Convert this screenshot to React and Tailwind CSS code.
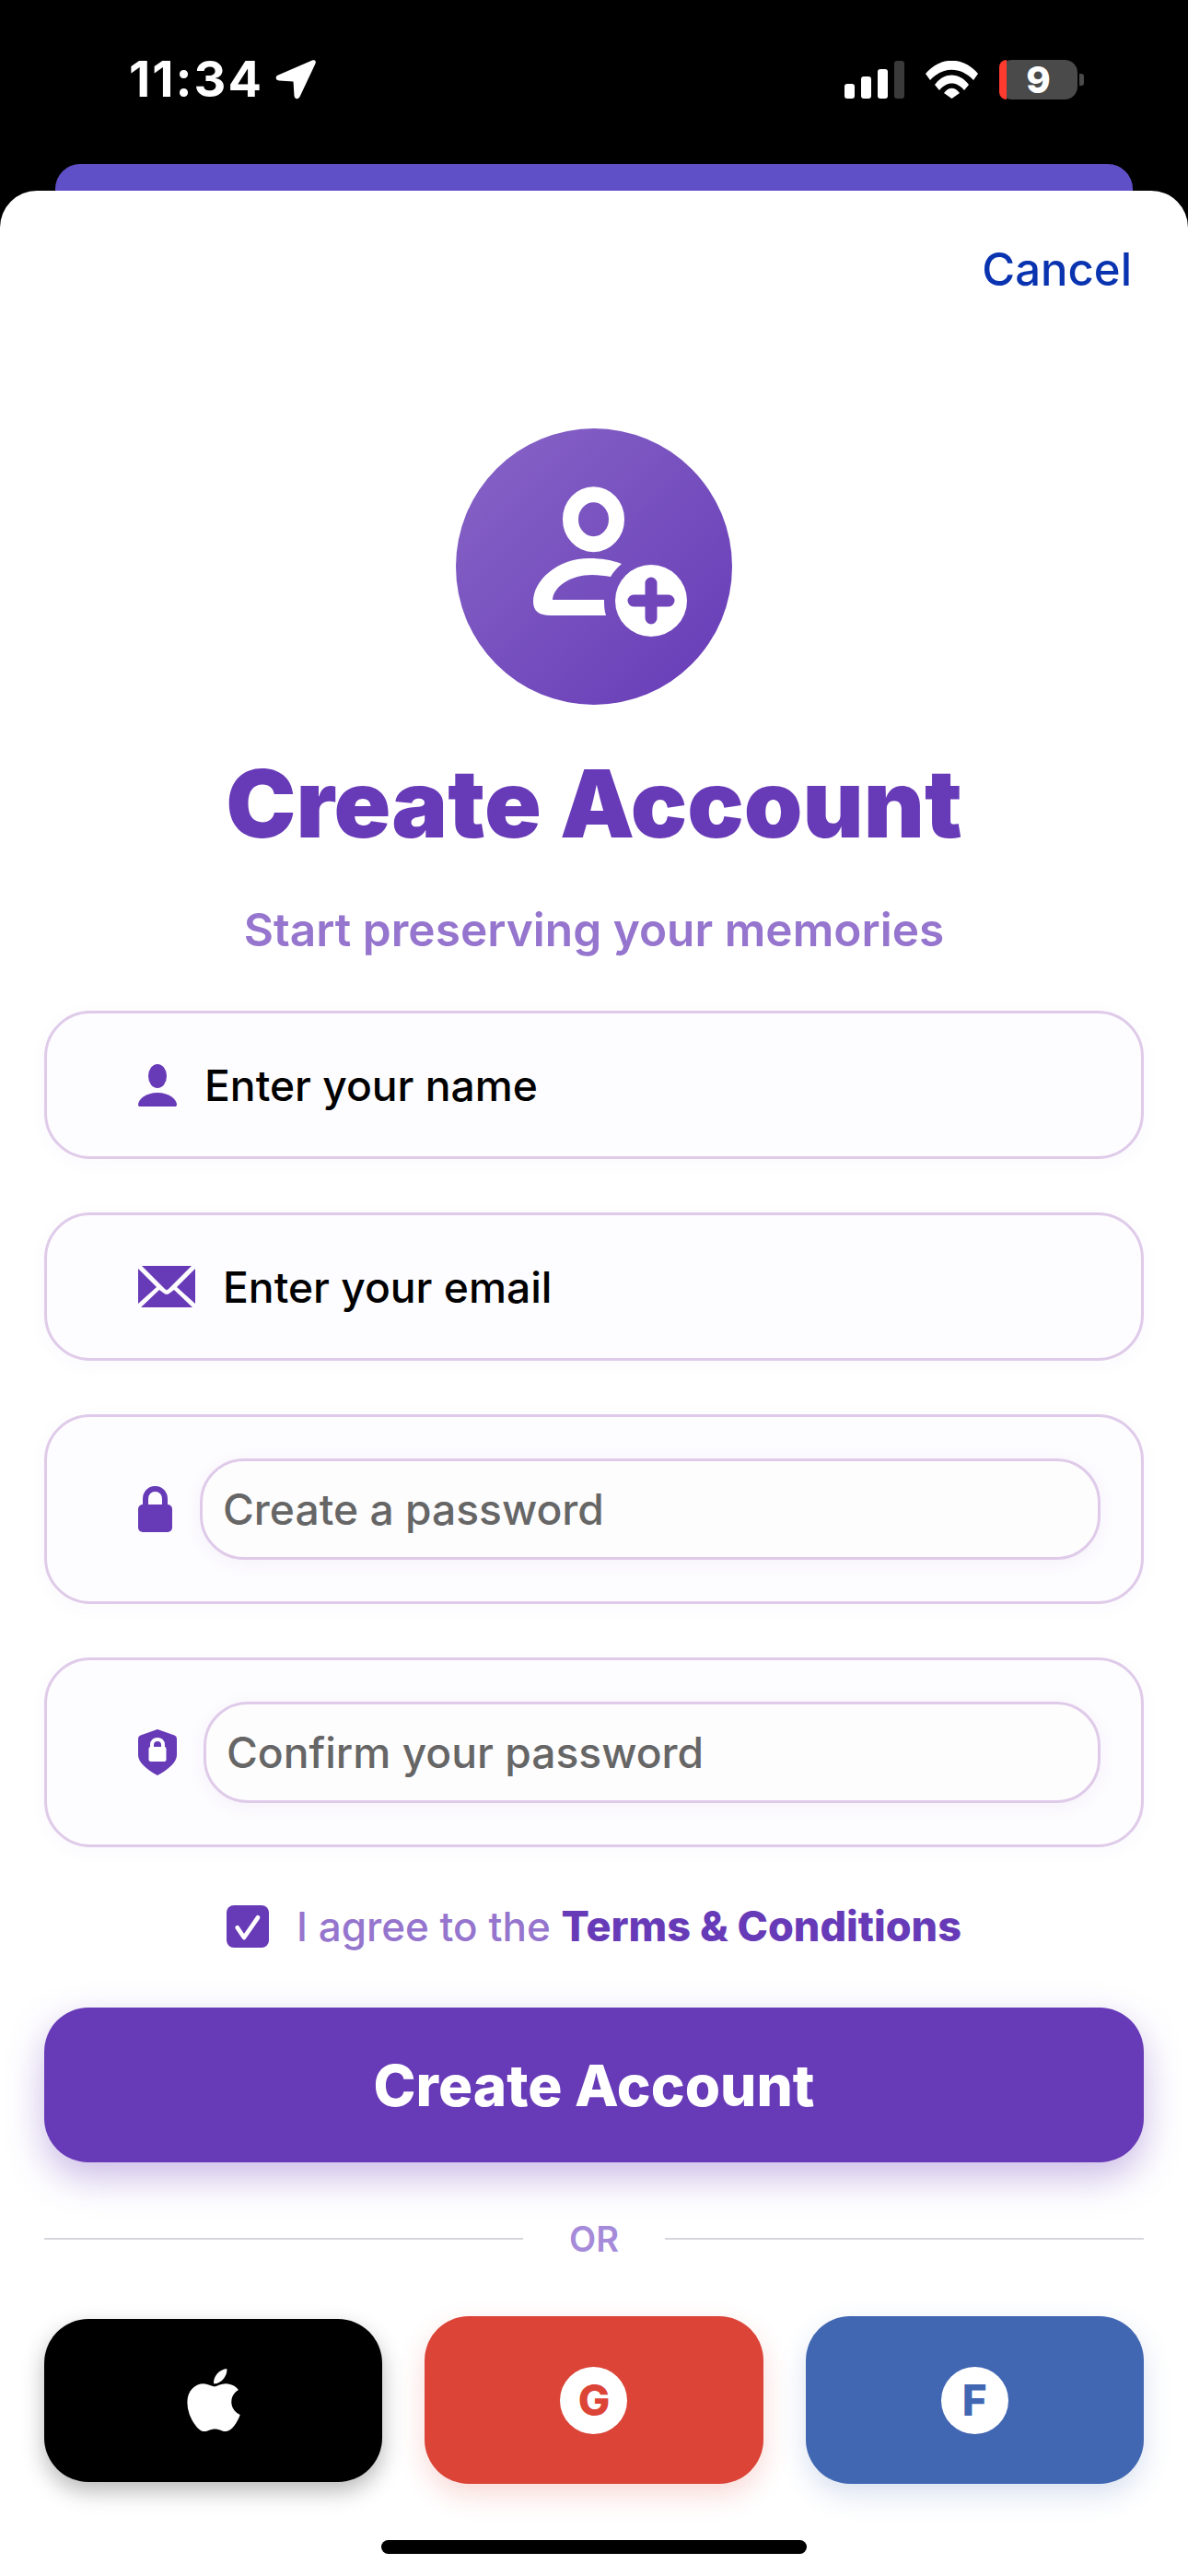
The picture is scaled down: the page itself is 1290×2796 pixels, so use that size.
import React from 'react';
import { FaApple } from 'react-icons/fa';

const PersonPlusIcon = () => (
  <svg width="300" height="300" viewBox="0 0 300 300">
    <ellipse cx="149.500" cy="98.700" rx="25" ry="27" fill="none" stroke="#fff" strokeWidth="17" />
    <path
      d="M180 147C170 143 158 141 145 141C110 141 84 165 84 188C84 198 90 203 103 203H163C161 197 161 192 161 186H105C106 172 124 159 148 159C155 159 162 160 168 161C171 156 175 151 180 147Z"
      fill="#fff"
    />
    <circle cx="212" cy="187" r="39" fill="#fff" />
    <path d="M193 187H231M212 168V206" stroke="#7146bb" strokeWidth="13" strokeLinecap="round" />
  </svg>
);

const UserIcon = () => (
  <svg width="42" height="46" viewBox="0 0 42 46" className="shrink-0">
    <ellipse cx="21" cy="13" rx="10" ry="13" fill="#673ab7" />
    <path d="M21 31C9 31 0 38 0 44C0 45.500 1 46 2 46H40C41 46 42 45.500 42 44C42 38 33 31 21 31Z" fill="#673ab7" />
  </svg>
);

const MailIcon = () => (
  <svg width="62" height="45" viewBox="0 0 62 45" className="shrink-0">
    <path d="M4 0H58L33 25C31.500 26.500 30.500 26.500 29 25Z" fill="#673ab7" />
    <path d="M0 3L20 23L0 41Z M62 3L42 23L62 41Z" fill="#673ab7" />
    <path d="M23 26L27 29C30 31.500 32 31.500 35 29L39 26L59 45H3Z" fill="#673ab7" />
  </svg>
);

const LockIcon = () => (
  <svg width="37" height="50" viewBox="0 0 37 50" className="shrink-0">
    <path d="M8 22V14C8 8 12 3 18.500 3C25 3 29 8 29 14V22" fill="none" stroke="#673ab7" strokeWidth="6" />
    <rect x="0" y="20" width="37" height="30" rx="5" fill="#673ab7" />
  </svg>
);

const ShieldIcon = () => (
  <svg width="42" height="50" viewBox="0 0 42 50" className="shrink-0">
    <path d="M21 0L38 6C41 7 42 8 42 11V28C42 36 32 44 21 50C10 44 0 36 0 28V11C0 8 1 7 4 6Z" fill="#673ab7" />
    <path d="M15 21V17C15 13 17.500 11 21 11C24.500 11 27 13 27 17V21" fill="none" stroke="#fff" strokeWidth="4" />
    <rect x="11.500" y="19" width="19" height="16" rx="2" fill="#fff" />
  </svg>
);

const StatusBar = () => (
  <div className="h-[178px] flex items-start justify-between pl-[140px] pr-[113px] pt-[63px] text-white">
    <div className="flex items-center gap-[13px] h-[46px]">
      <span className="text-[54px] leading-[46px] font-bold tracking-[2px]">11:34</span>
      <svg width="44" height="44" viewBox="0 0 44 44">
        <path d="M40 1.500C43 0.500 44.500 2 43.500 5L27 40C25 44.500 21 44 20.500 40L19.500 24.500L4 23.500C0 23 -0.500 19 3 17.500Z" fill="#fff" />
      </svg>
    </div>
    <div className="flex items-center h-[46px]">
      <div className="flex items-end gap-[7px] h-[41px]">
        <div className="w-[11px] h-[16px] rounded-[3px] bg-white" />
        <div className="w-[11px] h-[24px] rounded-[3px] bg-white" />
        <div className="w-[11px] h-[32px] rounded-[3px] bg-white" />
        <div className="w-[11px] h-[41px] rounded-[3px] bg-[#3a3a3a]" />
      </div>
      <svg width="57" height="41" viewBox="0 0 57 41" className="ml-[23px]">
        <path d="M0 14C16 -5 41 -5 57 14L52 21C38 6 19 6 5 21Z" fill="#fff" />
        <path d="M10 26C20 12 37 12 47 26L42 32C34 22 23 22 15 32Z" fill="#fff" />
        <path d="M20 35C25 28 32 28 37 35L28.500 41Z" fill="#fff" />
      </svg>
      <div className="ml-[23px] w-[85px] h-[43px] rounded-[14px] bg-[#4a4a4a] relative flex items-center justify-center">
        <div className="absolute left-0 top-0 bottom-0 w-[8px] rounded-l-[14px] bg-[#ff3b30]" />
        <span className="text-[40px] leading-[43px] font-extrabold">9</span>
      </div>
      <div className="ml-[2px] w-[5px] h-[13px] rounded-r-[3px] bg-[#4a4a4a]" />
    </div>
  </div>
);

const Field = ({ icon, gap, label, className }) => (
  <div className={`h-[161px] shrink-0 rounded-[50px] border-[3px] border-[#dfcbe9] bg-[#fdfcfe] shadow-[0_4px_20px_rgba(103,58,183,0.04)] flex items-center pl-[99px] ${className}`}>
    {icon}
    <span className={`mt-[2px] text-[46.200px] font-medium text-black ${gap}`}>{label}</span>
  </div>
);

const PasswordField = ({ icon, gap, label, className }) => (
  <div className={`h-[206px] shrink-0 rounded-[50px] border-[3px] border-[#dfcbe9] bg-[#fdfcfe] shadow-[0_4px_20px_rgba(103,58,183,0.04)] flex items-center pl-[99px] pr-[44px] ${className}`}>
    {icon}
    <div className={`flex-1 h-[110px] rounded-[48px] border-[3px] border-[#dfcbe9] bg-[#fefdfe] shadow-[0_4px_20px_rgba(103,58,183,0.05)] flex items-center pl-[22px] ${gap}`}>
      <span className="mt-[2px] text-[46.200px] font-medium text-[#666666]">{label}</span>
    </div>
  </div>
);

export default function App() {
  return (
    <div className="w-[1290px] h-[2796px] overflow-hidden bg-black flex flex-col font-['Inter',sans-serif]">
      <StatusBar />
      <div className="mx-[60px] h-[29px] shrink-0 rounded-t-[27px] bg-[#6050c8]" />

      <div className="flex-1 rounded-t-[40px] bg-white px-[48px] flex flex-col">
        {/* Cancel */}
        <div className="pt-[58px] h-[114px] flex justify-end pr-[13px]">
          <span className="text-[49px] leading-[56px] font-medium text-[#0a33b0]">Cancel</span>
        </div>

        {/* Header */}
        <div className="mt-[144px] self-center w-[300px] h-[300px] rounded-full bg-gradient-to-br from-[#8864c6] to-[#673ab7]">
          <PersonPlusIcon />
        </div>
        <h1 className="mt-[52px] h-[110px] text-center text-[102px] leading-[110px] font-black text-[#673ab7]">Create Account</h1>
        <p className="mt-[52px] h-[60px] text-center text-[49.600px] leading-[60px] font-semibold text-[#9575cd]">Start preserving your memories</p>

        {/* Form */}
        <Field className="mt-[58px]" icon={<UserIcon />} gap="ml-[30px]" label="Enter your name" />
        <Field className="mt-[58px]" icon={<MailIcon />} gap="ml-[30px]" label="Enter your email" />
        <PasswordField className="mt-[58px]" icon={<LockIcon />} gap="ml-[30px]" label="Create a password" />
        <PasswordField className="mt-[58px]" icon={<ShieldIcon />} gap="ml-[29px]" label="Confirm your password" />

        {/* Terms */}
        <div className="mt-[62px] h-[48px] flex items-center justify-center gap-[30px]">
          <div className="w-[46px] h-[46px] rounded-[8px] bg-[#673ab7]">
            <svg width="46" height="46" viewBox="0 0 46 46">
              <path d="M11.700 24.300L19 35L34 13.300" fill="none" stroke="#fff" strokeWidth="4.700" strokeLinecap="round" strokeLinejoin="round" />
            </svg>
          </div>
          <span className="text-[44px] leading-[48px] font-medium text-[#9575cd]">
            I agree to the <span className="text-[45px] font-extrabold text-[#673ab7]">Terms &amp; Conditions</span>
          </span>
        </div>

        {/* Submit */}
        <button className="mt-[64px] h-[168px] shrink-0 rounded-[48px] bg-[#673ab7] text-white text-[62px] font-extrabold shadow-[0_16px_40px_rgba(103,58,183,0.35)]">
          Create Account
        </button>

        {/* Divider */}
        <div className="mt-[63px] h-[40px] flex items-center">
          <div className="flex-1 h-[2px] bg-[#d8d6dc]" />
          <span className="w-[154px] text-center text-[38px] font-semibold text-[#a58bd9]">OR</span>
          <div className="flex-1 h-[2px] bg-[#d8d6dc]" />
        </div>

        {/* Social */}
        <div className="mt-[64px] h-[182px] grid grid-cols-3 gap-[46px] items-center">
          <div className="h-[177px] rounded-[48px] bg-black flex items-center justify-center shadow-[0_10px_24px_rgba(0,0,0,0.28)]">
            <FaApple size={78} color="#fff" />
          </div>
          <div className="h-[182px] rounded-[48px] bg-[#db4437] flex items-center justify-center shadow-[0_12px_30px_rgba(219,68,55,0.2)]">
            <div className="w-[73px] h-[73px] rounded-full bg-white flex items-center justify-center text-[46px] font-extrabold text-[#db4437]">G</div>
          </div>
          <div className="h-[182px] rounded-[48px] bg-[#4267b2] flex items-center justify-center shadow-[0_12px_30px_rgba(66,103,178,0.2)]">
            <div className="w-[73px] h-[73px] rounded-full bg-white flex items-center justify-center text-[46px] font-extrabold text-[#4267b2]">F</div>
          </div>
        </div>

        {/* Home indicator */}
        <div className="mt-[61px] self-center w-[462px] h-[15px] rounded-full bg-black" />
      </div>
    </div>
  );
}
